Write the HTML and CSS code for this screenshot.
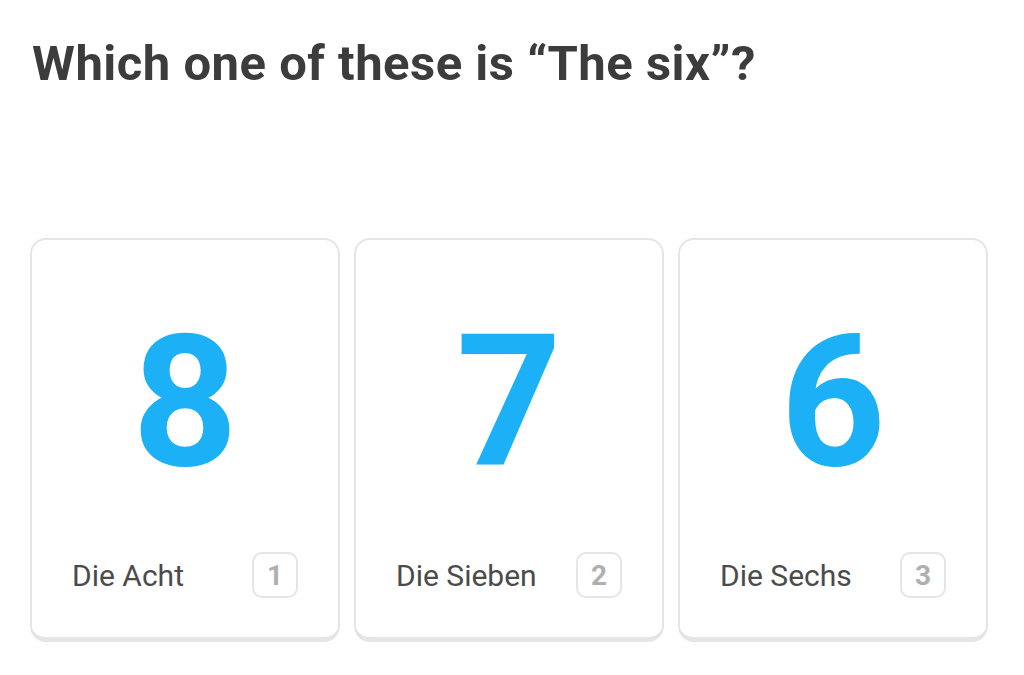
FILE: index.html
```html
<!DOCTYPE html>
<html lang="en">
<head>
<meta charset="utf-8">
<title>Challenge</title>
<link rel="stylesheet" href="styles.css">
</head>
<body>
<main class="challenge">
  <h1 class="prompt">Which one of these is “The six”?</h1>
  <div class="choices">
    <div class="card">
      <div class="figure"><span class="digit">8</span></div>
      <div class="footer"><span class="label">Die Acht</span><span class="key">1</span></div>
    </div>
    <div class="card">
      <div class="figure"><span class="digit">7</span></div>
      <div class="footer"><span class="label">Die Sieben</span><span class="key">2</span></div>
    </div>
    <div class="card">
      <div class="figure"><span class="digit">6</span></div>
      <div class="footer"><span class="label">Die Sechs</span><span class="key">3</span></div>
    </div>
  </div>
</main>
</body>
</html>
```
FILE: styles.css
```css
html, body {
  margin: 0;
  padding: 0;
  background: #ffffff;
}
body {
  font-family: Roboto, "Noto Sans", sans-serif;
  width: 1024px;
  height: 675px;
  overflow: hidden;
}
.challenge {
  padding: 32px 36px 0 30px;
}
.prompt {
  margin: 0 0 0 2px;
  font-size: 49px;
  line-height: 64px;
  font-weight: 700;
  letter-spacing: 0.5px;
  color: #3c3c3c;
}
.choices {
  margin-top: 142px;
  display: grid;
  grid-template-columns: repeat(3, 310px);
  gap: 14px;
}
.card {
  box-sizing: border-box;
  height: 404px;
  border: 2px solid #e5e5e5;
  border-bottom-width: 5px;
  border-radius: 16px;
  display: flex;
  flex-direction: column;
}
.figure {
  flex: 1;
  display: flex;
  align-items: center;
  justify-content: center;
  padding-top: 12px;
}
.digit {
  font-size: 184px;
  line-height: 1;
  font-weight: 700;
  color: #1cb0f6;
}
.footer {
  display: flex;
  justify-content: space-between;
  align-items: center;
  padding: 0 40px 39px 40px;
}
.label {
  font-size: 30px;
  color: #4b4b4b;
}
.key {
  box-sizing: border-box;
  width: 46px;
  height: 46px;
  border: 2px solid #e5e5e5;
  border-radius: 10px;
  display: flex;
  align-items: center;
  justify-content: center;
  font-size: 28px;
  font-weight: 700;
  color: #afafaf;
}
```
